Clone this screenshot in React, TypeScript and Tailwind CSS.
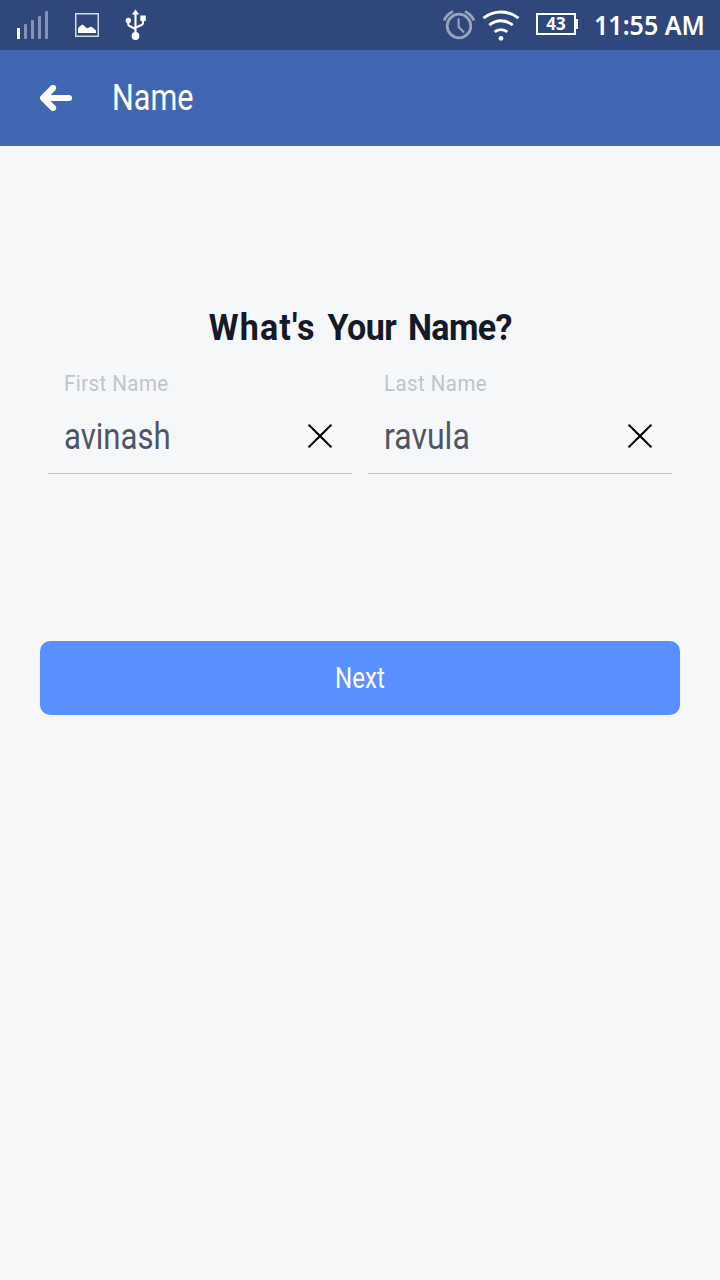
import React from "react";

function SignalIcon() {
  return (
    <svg width="32" height="28" viewBox="0 0 32 28">
      <rect x="0" y="17" width="3" height="11" fill="#fff" />
      <g fill="#8494b4">
        <rect x="7" y="13" width="3" height="15" rx="1" />
        <rect x="14" y="9" width="3" height="19" rx="1" />
        <rect x="21" y="5" width="3" height="23" rx="1" />
        <rect x="28" y="0" width="3" height="28" rx="1" />
      </g>
    </svg>
  );
}

function PictureIcon() {
  return (
    <svg width="24" height="24" viewBox="0 0 24 24">
      <rect x="0.75" y="0.75" width="22.5" height="22.5" fill="none" stroke="#d3d9e5" strokeWidth="1.5" />
      <path d="M3 20v-4.5l1.5-2L7.500 11.500l3.500 3 1.500.8 3.500-1.800 2.500 1.800 2.500 2.200V20z" fill="#fff" />
    </svg>
  );
}

function UsbIcon() {
  return (
    <svg width="22" height="32" viewBox="0 0 22 32">
      <g fill="#fff">
        <path d="M10.500 0.500l3.700 5H6.800z" />
        <circle cx="10.500" cy="27" r="3.900" />
        <circle cx="3.300" cy="11.500" r="2.700" />
        <rect x="15.300" y="6.500" width="5.500" height="5.500" />
      </g>
      <path d="M10.500 4v20M3.300 11v4.200q0 1.300 1.200 1.800l6 3M18 10v4q0 1.200-1.200 1.700l-6.300 3" fill="none" stroke="#fff" strokeWidth="2.100" />
    </svg>
  );
}

function AlarmIcon() {
  return (
    <svg width="32" height="30" viewBox="0 0 32 30" fill="none" stroke="#98a4c0">
      <circle cx="16" cy="16" r="11.800" strokeWidth="2.800" />
      <path d="M15.600 8.500v8.500l5.500 5.500" strokeWidth="2.100" />
      <path d="M1 10.500Q3.500 4.500 10 1.500M31 10.500Q28.500 4.500 22 1.500" strokeWidth="2.800" />
    </svg>
  );
}

function WifiIcon() {
  return (
    <svg width="38" height="32" viewBox="0 0 38 32" fill="none" stroke="#fff" strokeWidth="2.900">
      <path d="M1.500 9.200Q9 3 19 3T36.500 9.200" />
      <path d="M7.300 16.200Q12.500 11.800 19 11.800T30.700 16.200" />
      <path d="M12.700 22.900Q15.500 20.600 19 20.600T25.300 22.900" />
      <circle cx="19" cy="29.300" r="2.400" fill="#fff" stroke="none" />
    </svg>
  );
}

function BackIcon() {
  return (
    <svg width="32" height="26" viewBox="0 0 32 26" fill="none" stroke="#fff" strokeLinecap="round" strokeLinejoin="round">
      <path d="M13 3L3.200 13l9.800 10" strokeWidth="6.200" />
      <path d="M4 13h25" strokeWidth="6" />
    </svg>
  );
}

function ClearIcon() {
  return (
    <svg width="24" height="24" viewBox="0 0 24 24" fill="none" stroke="#000" strokeWidth="2" strokeLinecap="round">
      <path d="M1.200 1.200l21.600 21.600M22.800 1.200L1.200 22.800" />
    </svg>
  );
}

type FieldProps = { label: string; value: string; valueScale: string };

function Field({ label, value, valueScale }: FieldProps) {
  return (
    <div className="h-[114px] w-[304px] border-b border-[#bdc1c6] px-4">
      <div className="h-[48px] pt-[10px]">
        <span className="block w-max origin-left scale-x-[0.91] text-[22.5px] leading-[26px] tracking-[0.5px] text-[#c0c4cc]">{label}</span>
      </div>
      <div className="flex h-[56px] items-center justify-between pr-1">
        <span className={`block w-max origin-left pt-[2px] text-[36px] leading-[42px] text-[#4e5665] ${valueScale}`}>{value}</span>
        <button aria-label={`Clear ${label}`}><ClearIcon /></button>
      </div>
    </div>
  );
}

export default function App() {
  return (
    <div className="flex h-[1280px] w-[720px] flex-col overflow-hidden bg-[#f6f7f9] font-['Roboto',sans-serif]">
      <div className="flex h-[50px] items-center justify-between bg-[#2f477a] pr-4 pl-[17px] text-white">
        <div className="flex items-center">
          <SignalIcon />
          <div className="ml-[26px]"><PictureIcon /></div>
          <div className="ml-[26px]"><UsbIcon /></div>
        </div>
        <div className="flex items-center">
          <AlarmIcon />
          <div className="ml-[7px]"><WifiIcon /></div>
          <div className="ml-4 flex items-center pb-[2px]">
            <div className="flex h-[22px] w-[40px] items-center justify-center border-2 border-white pb-[2px] font-['Noto_Sans',sans-serif] text-[17px] leading-none font-bold">43</div>
            <div className="h-[10px] w-[2px] bg-white" />
          </div>
          <div className="ml-4 w-[110px]">
            <span className="block w-max origin-left scale-x-[0.945] pb-px font-['Noto_Sans',sans-serif] text-[26.5px] leading-[32px] font-semibold">11:55 AM</span>
          </div>
        </div>
      </div>
      <header className="flex h-24 items-center bg-[#4267b2] pl-10 text-white">
        <button aria-label="Back"><BackIcon /></button>
        <h1 className="ml-10 w-max origin-left scale-x-[0.85] text-[36px] leading-[42px]">Name</h1>
      </header>
      <main className="flex flex-col px-10 pt-[161px]">
        <h2 className="w-max origin-center scale-x-[0.945] self-center text-[36px] leading-[42px] font-bold text-[#141a28] [word-spacing:3.5px]">
          <span className="tracking-[1.2px]">What's</span> <span className="tracking-[-0.5px]">Your</span> <span className="tracking-[-0.7px]">Name?</span>
        </h2>
        <div className="mt-[11px] flex gap-4 px-2">
          <Field label="First Name" value="avinash" valueScale="scale-x-[0.865]" />
          <Field label="Last Name" value="ravula" valueScale="scale-x-[0.89]" />
        </div>
        <button className="mt-[167px] flex h-[74px] items-center justify-center rounded-[10px] bg-[#5890ff] text-white">
          <span className="block scale-x-[0.83] text-[29px] leading-[34px]">Next</span>
        </button>
      </main>
    </div>
  );
}
